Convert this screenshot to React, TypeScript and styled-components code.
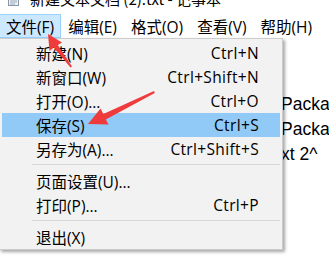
import React from "react";
import styled, { createGlobalStyle } from "styled-components";

const GlobalStyle = createGlobalStyle`
  html, body {
    margin: 0;
    padding: 0;
    background: #ffffff;
    overflow: hidden;
  }
  body {
    width: 329px;
    height: 273px;
    font-family: "Open Sans", "Noto Sans CJK SC", sans-serif;
    color: #000;
  }
`;

const Window = styled.div`
  position: relative;
  width: 329px;
  height: 273px;
  overflow: hidden;
  background: #ffffff;
`;

const TitleBar = styled.div`
  height: 13px;
  display: flex;
  align-items: flex-start;
  overflow: hidden;
  padding-left: 8px;
`;

const TitleIcon = styled.svg`
  flex: none;
  margin-top: -8px;
`;

const TitleText = styled.span`
  margin-left: 11px;
  margin-top: -9px;
  font-size: 15px;
  line-height: 15px;
  white-space: nowrap;
  font-family: "Noto Sans CJK SC", "Open Sans", sans-serif;
`;

const MenuBar = styled.div`
  height: 25px;
  padding-top: 1px;
  box-sizing: border-box;
  display: flex;
  margin-left: -1px;
`;

const MenuBarItem = styled.div<{ $active?: boolean }>`
  box-sizing: border-box;
  height: 24px;
  padding: 0 6px;
  display: flex;
  align-items: center;
  font-size: 15.5px;
  white-space: nowrap;
  border: 1px solid ${(p) => (p.$active ? "#99d1ff" : "transparent")};
  background: ${(p) => (p.$active ? "#cce8ff" : "transparent")};
`;

const Editor = styled.div`
  padding: 54px 0 0 281px;
  font-family: "Liberation Sans", Arial, sans-serif;
  font-size: 17.5px;
  line-height: 25px;
  white-space: pre;
`;

const Dropdown = styled.div`
  position: absolute;
  left: -1px;
  top: 38px;
  width: 284px;
  box-sizing: border-box;
  background: #f2f2f2;
  border: 1px solid #cccccc;
  padding: 2px 2px 0 2px;
  box-shadow: 2px 2px 3px rgba(0, 0, 0, 0.35);
`;

const DropItem = styled.div<{ $hl?: boolean }>`
  height: 24px;
  display: flex;
  align-items: center;
  justify-content: space-between;
  padding: 0 21px 0 34px;
  font-size: 15.5px;
  white-space: nowrap;
  background: ${(p) => (p.$hl ? "#91c9f7" : "transparent")};
`;

const Shortcut = styled.span`
  letter-spacing: 0.35px;
`;

const Separator = styled.div`
  height: 8px;
  padding-top: 3px;
  box-sizing: border-box;
  &::after {
    content: "";
    display: block;
    margin-left: 30px;
    border-top: 1px solid #d7d7d7;
  }
`;

const Overlay = styled.svg`
  position: absolute;
  left: 0;
  top: 0;
  pointer-events: none;
`;

type Item = { label: string; key?: string; hl?: boolean } | "sep";

const items: Item[] = [
  { label: "新建(N)", key: "Ctrl+N" },
  { label: "新窗口(W)", key: "Ctrl+Shift+N" },
  { label: "打开(O)...", key: "Ctrl+O" },
  { label: "保存(S)", key: "Ctrl+S", hl: true },
  { label: "另存为(A)...", key: "Ctrl+Shift+S" },
  "sep",
  { label: "页面设置(U)..." },
  { label: "打印(P)...", key: "Ctrl+P" },
  "sep",
  { label: "退出(X)" },
];

const menus = ["文件(F)", "编辑(E)", "格式(O)", "查看(V)", "帮助(H)"];

export default function App() {
  return (
    <Window>
      <GlobalStyle />
      <TitleBar>
        <TitleIcon width="11" height="14" viewBox="0 0 11 14">
          <rect x="0.5" y="0.5" width="10" height="13" fill="#eef3f8" stroke="#8796a6" />
          <rect x="1" y="1" width="9" height="2" fill="#7fb2e0" />
          <line x1="2" y1="6" x2="9" y2="6" stroke="#9aa7b4" />
          <line x1="2" y1="8" x2="9" y2="8" stroke="#9aa7b4" />
          <line x1="2" y1="10" x2="9" y2="10" stroke="#9aa7b4" />
          <line x1="2" y1="12" x2="7" y2="12" stroke="#9aa7b4" />
        </TitleIcon>
        <TitleText>新建文本文档 (2).txt - 记事本</TitleText>
      </TitleBar>
      <MenuBar>
        {menus.map((m, i) => (
          <MenuBarItem key={m} $active={i === 0}>
            {m}
          </MenuBarItem>
        ))}
      </MenuBar>
      <Editor>{"Package\nPackage\nxt 2^"}</Editor>
      <Dropdown>
        {items.map((it, i) =>
          it === "sep" ? (
            <Separator key={i} />
          ) : (
            <DropItem key={i} $hl={it.hl}>
              <span>{it.label}</span>
              {it.key ? <Shortcut>{it.key}</Shortcut> : null}
            </DropItem>
          )
        )}
      </Dropdown>
      <Overlay width="329" height="273" viewBox="0 0 329 273">
        <polygon
          points="48,34 62,42.5 57.8,45 72,66.5 70.5,67.5 53.8,47.5 49.5,51"
          fill="#ef3b3b"
        />
        <polygon
          points="88,124 100.5,108.5 103.3,114 154,91 154.8,93 105.8,119.5 108.5,124.5"
          fill="#ef3b3b"
        />
      </Overlay>
    </Window>
  );
}
